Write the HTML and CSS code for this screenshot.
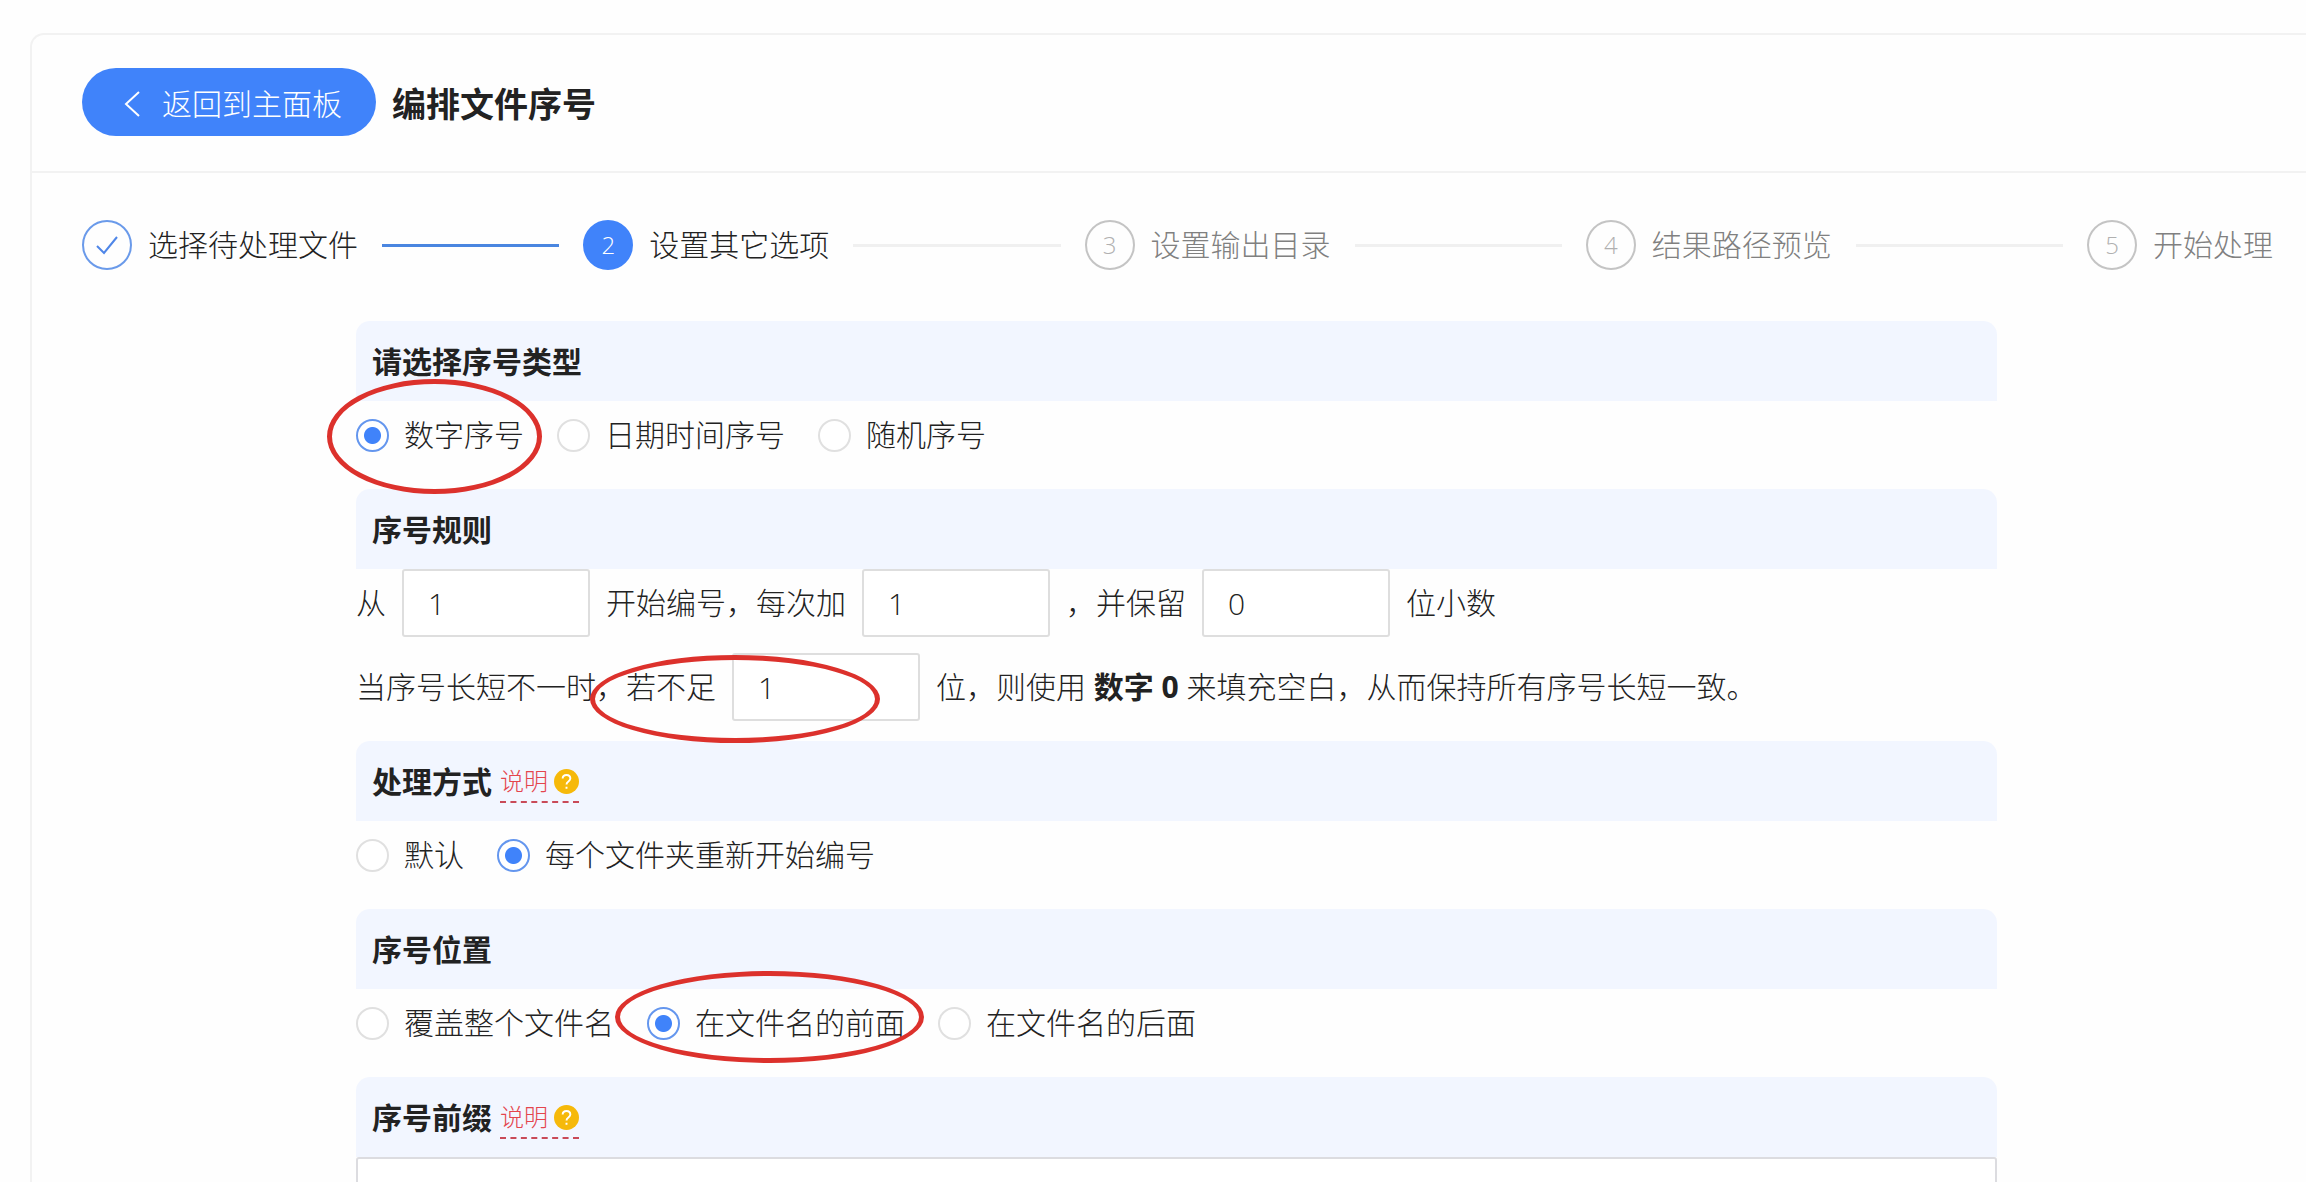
FILE: index.html
```html
<!DOCTYPE html>
<html lang="zh-CN">
<head>
<meta charset="utf-8">
<meta name="viewport" content="width=device-width, initial-scale=1">
<title>编排文件序号</title>
<link rel="stylesheet" href="styles.css">
</head>
<body>
<main class="panel">
  <header class="panel-header">
    <button class="back-button" type="button">
      <svg class="back-icon" viewBox="0 0 20 28" aria-hidden="true"><path d="M17 2 L4 14 L17 26"/></svg>
      <span>返回到主面板</span>
    </button>
    <h1 class="panel-title">编排文件序号</h1>
  </header>

  <ol class="steps">
    <li class="step step-done">
      <span class="step-mark"><svg class="check-icon" viewBox="0 0 24 20" aria-hidden="true"><path d="M2 11 L9 18 L22 2"/></svg></span>
      <span class="step-label">选择待处理文件</span>
    </li>
    <li class="step step-active"><span class="step-mark">2</span><span class="step-label">设置其它选项</span></li>
    <li class="step"><span class="step-mark">3</span><span class="step-label">设置输出目录</span></li>
    <li class="step"><span class="step-mark">4</span><span class="step-label">结果路径预览</span></li>
    <li class="step"><span class="step-mark">5</span><span class="step-label">开始处理</span></li>
  </ol>

  <form class="options">
    <section class="section">
      <h2 class="section-title">请选择序号类型</h2>
      <div class="row">
        <label class="choice"><input type="radio" name="kind" checked><span>数字序号</span></label>
        <label class="choice"><input type="radio" name="kind"><span>日期时间序号</span></label>
        <label class="choice"><input type="radio" name="kind"><span>随机序号</span></label>
      </div>
      <span class="callout callout-kind" aria-hidden="true"></span>
    </section>

    <section class="section">
      <h2 class="section-title">序号规则</h2>
      <div class="row">
        <label for="start">从</label>
        <input class="number" id="start" type="text" value="1">
        <label for="increment">开始编号，每次加</label>
        <input class="number" id="increment" type="text" value="1">
        <label for="decimals">，并保留</label>
        <input class="number" id="decimals" type="text" value="0">
        <span>位小数</span>
      </div>
      <div class="row">
        <label for="digits">当序号长短不一时，若不足</label>
        <input class="number" id="digits" type="text" value="1">
        <span>位，则使用 <strong>数字 0</strong> 来填充空白，从而保持所有序号长短一致。</span>
      </div>
      <span class="callout callout-digits" aria-hidden="true"></span>
    </section>

    <section class="section">
      <h2 class="section-title">处理方式
        <a class="help" href="#mode-help">说明<svg class="help-icon" viewBox="0 0 26 26" aria-hidden="true"><circle cx="13" cy="13" r="13"/><path d="M9 10 C9 5 17 5 17 10 C17 13 13 13 13 16 M13 18.500 V20.500"/></svg></a>
      </h2>
      <div class="row">
        <label class="choice"><input type="radio" name="mode"><span>默认</span></label>
        <label class="choice"><input type="radio" name="mode" checked><span>每个文件夹重新开始编号</span></label>
      </div>
    </section>

    <section class="section">
      <h2 class="section-title">序号位置</h2>
      <div class="row">
        <label class="choice"><input type="radio" name="place"><span>覆盖整个文件名</span></label>
        <label class="choice"><input type="radio" name="place" checked><span>在文件名的前面</span></label>
        <label class="choice"><input type="radio" name="place"><span>在文件名的后面</span></label>
      </div>
      <span class="callout callout-place" aria-hidden="true"></span>
    </section>

    <section class="section">
      <h2 class="section-title" id="prefix-title">序号前缀
        <a class="help" href="#prefix-help">说明<svg class="help-icon" viewBox="0 0 26 26" aria-hidden="true"><circle cx="13" cy="13" r="13"/><path d="M9 10 C9 5 17 5 17 10 C17 13 13 13 13 16 M13 18.500 V20.500"/></svg></a>
      </h2>
      <input class="prefix" type="text" aria-labelledby="prefix-title">
    </section>
  </form>
</main>
</body>
</html>
```
FILE: styles.css
```css
* {
  box-sizing: border-box;
}

body {
  margin: 0;
  padding: 33px 0 0 30px;
  background: #fefefe;
  color: #222;
  font-family: "Open Sans", "Noto Sans CJK SC", sans-serif;
  font-size: 30px;
  font-weight: 300;
  line-height: 40px;
}

input,
button {
  font: inherit;
  color: inherit;
}

.panel {
  border: 2px solid #f2f2f2;
  border-right: 0;
  border-radius: 14px 0 0 0;
}

.panel-header {
  display: flex;
  align-items: center;
  gap: 16px;
  padding: 33px 50px 35px;
  border-bottom: 2px solid #f2f2f2;
}

.back-button {
  display: flex;
  align-items: center;
  gap: 20px;
  height: 68px;
  padding: 4px 34px 0 40px;
  border: 0;
  border-radius: 34px;
  background: #4083fa;
  color: #fff;
}

.back-icon {
  width: 20px;
  height: 28px;
  fill: none;
  stroke: #fff;
  stroke-width: 2;
}

.panel-title {
  margin: 0;
  padding-top: 4px;
  color: #222;
  font-size: 34px;
  font-weight: 700;
}

.steps {
  display: flex;
  margin: 0;
  padding: 47px 33px 51px 50px;
  list-style: none;
}

.step {
  display: flex;
  flex: 1 1 0;
  align-items: center;
  color: #808080;
}

.step:last-child {
  flex: none;
}

.step-mark {
  display: flex;
  align-items: center;
  justify-content: center;
  width: 50px;
  height: 50px;
  margin-right: 16px;
  border: 2px solid #c4c4c4;
  border-radius: 50%;
  color: #b0b0b0;
  font-size: 24px;
}

.step:not(:last-child)::after {
  content: "";
  flex: 1;
  height: 3px;
  margin: 0 24px;
  background: #f0f0f0;
}

.step-done,
.step-active {
  color: #222;
}

.step-done .step-mark {
  border-color: #6a9aea;
}

.step-done:not(:last-child)::after {
  background: #4a86e0;
}

.step-active .step-mark {
  border-color: #4083fa;
  background: #4083fa;
  color: #fff;
}

.check-icon {
  width: 24px;
  height: 20px;
  fill: none;
  stroke: #4f86e8;
  stroke-width: 2;
}

.options {
  margin: 0 309px 0 324px;
}

.section {
  position: relative;
  padding-bottom: 20px;
}

.section-title {
  display: flex;
  align-items: center;
  gap: 8px;
  height: 80px;
  margin: 0;
  padding: 2px 16px 0;
  border-radius: 14px 14px 0 0;
  background: #f2f6ff;
  color: #222;
  font-size: 30px;
  font-weight: 700;
}

.row {
  display: flex;
  align-items: center;
  height: 68px;
}

.row + .row {
  margin-top: 16px;
}

.choice {
  display: flex;
  align-items: center;
  gap: 15px;
  margin-right: 33px;
}

.choice input {
  appearance: none;
  width: 33px;
  height: 33px;
  margin: 0;
  border: 2px solid #e0e0e0;
  border-radius: 50%;
  background: #fff;
}

.choice input:checked {
  border-color: #6496ee;
  background: radial-gradient(circle, #4083fa 8px, #fff 9px);
}

.number {
  width: 188px;
  height: 68px;
  margin: 0 16px;
  padding: 0 24px;
  border: 2px solid #dedede;
  border-radius: 3px;
  background: #fff;
}

.row strong {
  font-weight: 700;
}

.help {
  display: flex;
  align-items: center;
  gap: 6px;
  border-bottom: 2px dashed #c94a58;
  color: #e4454d;
  font-size: 24px;
  font-weight: 300;
  text-decoration: none;
}

.help-icon {
  width: 25px;
  height: 25px;
  fill: #f6b90a;
}

.help-icon path {
  fill: none;
  stroke: #fff;
  stroke-width: 2;
}

.prefix {
  display: block;
  width: 100%;
  height: 68px;
  padding: 0 24px;
  border: 2px solid #dcdce0;
  border-radius: 3px;
  background: #fff;
}

/* Ovals laid over the form to point at the fields to set */
.callout {
  position: absolute;
  z-index: 1;
  border: 5px solid #dc312c;
  border-radius: 50%;
  pointer-events: none;
}

.callout-kind {
  top: 58px;
  left: -29px;
  width: 215px;
  height: 115px;
}

.callout-digits {
  top: 166px;
  left: 234px;
  width: 290px;
  height: 88px;
}

.callout-place {
  top: 62px;
  left: 259px;
  width: 309px;
  height: 92px;
}
```
